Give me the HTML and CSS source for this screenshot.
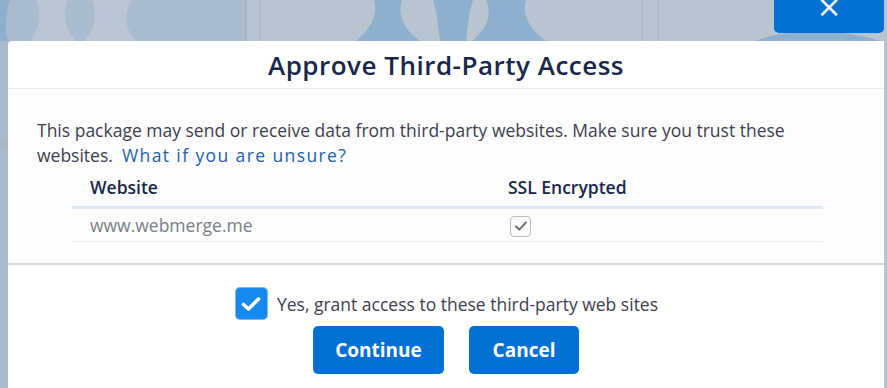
FILE: index.html
```html
<!DOCTYPE html>
<html lang="en">
<head>
<meta charset="utf-8">
<title>Approve Third-Party Access</title>
<link rel="stylesheet" href="styles.css">
</head>
<body>
<div class="stage">
  <svg class="backdrop" width="887" height="388" viewBox="0 0 887 388" aria-hidden="true">
    <rect x="0" y="0" width="887" height="388" fill="#b9c4d1"/>
    <rect x="0" y="0" width="245" height="388" fill="#aabbcd"/>
    <path d="M0 0 H10 C6 12 4 26 8 41 H0 Z" fill="#8fb0cc"/>
    <path d="M36 0 H68 C62 14 64 28 76 41 H30 C40 28 42 14 36 0 Z" fill="#bac6d3"/>
    <path d="M92 0 H132 C124 14 124 28 136 41 H84 C96 28 98 14 92 0 Z" fill="#bac6d3"/>
    <rect x="245" y="0" width="2" height="41" fill="#a3b3c4"/>
    <rect x="259" y="0" width="2" height="41" fill="#aebccb"/>
    <path d="M374 0 H402 C398 14 402 28 420 41 H356 C372 28 378 14 374 0 Z" fill="#8eb0cf"/>
    <path d="M433 0 H473 C468 14 468 28 466 41 H440 C438 28 438 14 433 0 Z" fill="#8eb0cf"/>
    <path d="M486 0 H526 C522 14 528 28 546 41 H472 C488 28 492 14 486 0 Z" fill="#8eb0cf"/>
    <rect x="641" y="0" width="2" height="41" fill="#aebccb"/>
    <rect x="657" y="0" width="2" height="41" fill="#aebccb"/>
    <path d="M756 41 C770 34 800 30 830 32 C850 33 866 36 880 41 Z" fill="#8eb0cf"/>
    <rect x="0" y="140" width="8" height="8" fill="#a8b6c6"/>
  </svg>

  <button class="close" type="button" aria-label="Close">×</button>

  <div class="modal">
    <header class="modal-header">
      <h2 class="modal-title">Approve Third-Party Access</h2>
    </header>
    <section class="modal-body">
      <p class="intro">This package may send or receive data from third-party websites. Make sure you trust these websites.&nbsp; <a class="link" href="#">What if you are unsure?</a></p>
      <table class="sites">
        <thead>
          <tr><th class="col-site">Website</th><th class="col-ssl">SSL Encrypted</th></tr>
        </thead>
        <tbody>
          <tr>
            <td class="col-site site-name">www.webmerge.me</td>
            <td class="col-ssl"><span class="ssl-box"><svg width="14" height="12" viewBox="0 0 14 12"><path d="M2 6.5 L5.3 9.6 L12 2.4" fill="none" stroke="#6f6f6f" stroke-width="2" stroke-linecap="round" stroke-linejoin="round"/></svg></span></td>
          </tr>
        </tbody>
      </table>
    </section>
    <footer class="modal-footer">
      <label class="grant">
        <span class="grant-box"><svg width="20" height="16" viewBox="0 0 20 16"><path d="M2.5 8.5 L7.5 13 L17.5 3" fill="none" stroke="#ffffff" stroke-width="3.6" stroke-linecap="round" stroke-linejoin="round"/></svg></span>
        <span class="grant-text">Yes, grant access to these third-party web sites</span>
      </label>
      <div class="actions">
        <button class="btn btn-continue" type="button">Continue</button>
        <button class="btn btn-cancel" type="button">Cancel</button>
      </div>
    </footer>
  </div>
</div>
</body>
</html>
```

FILE: styles.css
```css
* { box-sizing: border-box; }

html, body {
  margin: 0;
  padding: 0;
  background: #b9c4d1;
}

body {
  font-family: "Open Sans", "Noto Sans", "Liberation Sans", sans-serif;
  color: #3e3e3c;
}

.stage {
  position: relative;
  width: 887px;
  height: 388px;
  overflow: hidden;
  padding: 41px 3px 0 8px;
}

.backdrop {
  position: absolute;
  left: 0;
  top: 0;
  z-index: 0;
}

.close {
  position: absolute;
  left: 774px;
  top: -20px;
  width: 110px;
  height: 53px;
  border: 0;
  border-radius: 5px;
  background: #0070d2;
  color: #ffffff;
  font-family: "DejaVu Sans", sans-serif;
  font-size: 30px;
  line-height: 50px;
  padding: 0;
  z-index: 2;
}

.modal {
  position: relative;
  z-index: 1;
  width: 876px;
  height: 347px;
  background: #ffffff;
  border-radius: 4px 0 0 0;
  display: flex;
  flex-direction: column;
}

.modal-header {
  height: 48px;
  border-bottom: 1px solid #e4e9ef;
  display: flex;
  align-items: center;
  justify-content: center;
}

.modal-title {
  margin: 0;
  font-size: 26px;
  font-weight: 600;
  color: #18274a;
  letter-spacing: 0.5px;
  line-height: 1;
}

.modal-body {
  height: 176px;
  background: #fdfdfd;
  border-bottom: 2px solid #d8d8d8;
  padding: 29px 0 0 29px;
}

.intro {
  margin: 0;
  width: 790px;
  font-size: 17.5px;
  line-height: 25px;
  color: #3e3e50;
}

.link {
  color: #1d5fa8;
  text-decoration: none;
  letter-spacing: 1.4px;
}

.sites {
  margin: 4px 0 0 35px;
  width: 751px;
  border-collapse: collapse;
  font-size: 17.5px;
}

.sites th {
  text-align: left;
  font-weight: 600;
  color: #18274a;
  height: 35px;
  padding: 0 0 3px 18px;
  border-bottom: 3px solid #dde8f4;
}

.sites td {
  height: 34px;
  padding: 0 0 0 18px;
  border-bottom: 1px solid #eaeef2;
}

.sites .col-site { width: 418px; }

.site-name {
  color: #7a7f87;
}

.ssl-box {
  display: inline-flex;
  align-items: center;
  justify-content: center;
  width: 21px;
  height: 21px;
  margin-left: 2px;
  border: 1.5px solid #bdbdbd;
  border-radius: 4px;
  background: #fafafa;
  vertical-align: middle;
}

.modal-footer {
  flex: 1;
  display: flex;
  flex-direction: column;
  align-items: center;
  padding-top: 23px;
  background: #ffffff;
}

.grant {
  display: flex;
  align-items: center;
  gap: 10px;
  margin-left: 2px;
}

.grant-box {
  display: inline-flex;
  align-items: center;
  justify-content: center;
  width: 31px;
  height: 31px;
  border-radius: 4px;
  background: #1589ee;
  box-shadow: 0 0 0 1px #7fb6ec;
}

.grant-text {
  font-size: 17.5px;
  color: #3e3e50;
}

.actions {
  display: flex;
  gap: 25px;
  margin-top: 7px;
}

.btn {
  height: 48px;
  border: 0;
  border-radius: 5px;
  background: #0070d2;
  color: #ffffff;
  font-family: "Open Sans", "Noto Sans", "Liberation Sans", sans-serif;
  font-size: 19px;
  font-weight: 700;
  padding: 0;
}

.btn-continue { width: 131px; }
.btn-cancel { width: 110px; }
```
